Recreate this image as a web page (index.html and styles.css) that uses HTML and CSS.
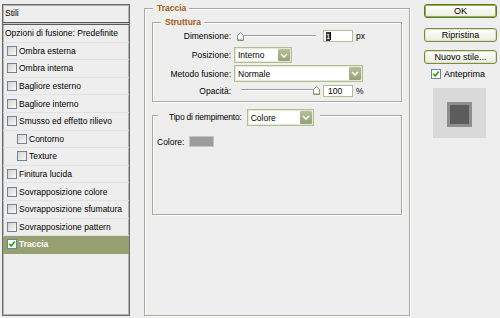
FILE: index.html
```html
<!DOCTYPE html>
<html lang="it">
<head>
    <meta charset="UTF-8">
    <meta name="viewport" content="width=device-width, initial-scale=1.0">
    <title>Stile livello</title>
    <link rel="stylesheet" href="styles.css">
</head>
<body>
    <div class="dialog">
        <div class="styles-list">
            <div class="list-head">Stili</div>
            <div class="list-split"></div>
            <div class="list-item plain">Opzioni di fusione: Predefinite</div>
            <div class="list-item"><span class="cb"></span>Ombra esterna</div>
            <div class="list-item"><span class="cb"></span>Ombra interna</div>
            <div class="list-item"><span class="cb"></span>Bagliore esterno</div>
            <div class="list-item"><span class="cb"></span>Bagliore interno</div>
            <div class="list-item"><span class="cb"></span>Smusso ed effetto rilievo</div>
            <div class="list-item sub"><span class="cb"></span>Contorno</div>
            <div class="list-item sub"><span class="cb"></span>Texture</div>
            <div class="list-item"><span class="cb"></span>Finitura lucida</div>
            <div class="list-item"><span class="cb"></span>Sovrapposizione colore</div>
            <div class="list-item"><span class="cb"></span>Sovrapposizione sfumatura</div>
            <div class="list-item"><span class="cb"></span>Sovrapposizione pattern</div>
            <div class="list-item active">
                <span class="cb checked"><svg width="8" height="8" viewBox="0 0 8 8"><polyline points="1.2,3.8 3.2,6 6.8,1.4" fill="none" stroke="#22a11f" stroke-width="1.7"/></svg></span>Traccia
            </div>
        </div>

        <fieldset class="group">
            <legend class="group-title">Traccia</legend>

            <fieldset class="sub-group">
                <legend class="group-title sub-title">Struttura</legend>

                <div class="field row-size">
                    <span class="field-label">Dimensione:</span>
                    <div class="slider">
                        <div class="track">
                            <span class="thumb" style="left: 0%"><svg width="7" height="9" viewBox="0 0 7 9"><polygon points="0.5,3.5 3.5,0.5 6.5,3.5 6.5,8.5 0.5,8.5" fill="#fff" stroke="#8c8c8c"/><line x1="1" y1="8" x2="6" y2="8" stroke="#5aa536"/></svg></span>
                        </div>
                    </div>
                    <span class="num"><span class="sel">1</span><i class="caret"></i></span>
                    <span class="unit">px</span>
                </div>

                <div class="field row-pos">
                    <span class="field-label">Posizione:</span>
                    <div class="select w-pos">
                        <span class="select-text">Interno</span>
                        <span class="arrow"><svg width="8" height="5" viewBox="0 0 8 5"><polyline points="1,1 4,4 7,1" fill="none" stroke="#fff" stroke-width="1.6"/></svg></span>
                    </div>
                </div>

                <div class="field row-blend">
                    <span class="field-label">Metodo fusione:</span>
                    <div class="select w-blend">
                        <span class="select-text">Normale</span>
                        <span class="arrow"><svg width="8" height="5" viewBox="0 0 8 5"><polyline points="1,1 4,4 7,1" fill="none" stroke="#fff" stroke-width="1.6"/></svg></span>
                    </div>
                </div>

                <div class="field row-opacity">
                    <span class="field-label">Opacità:</span>
                    <div class="slider">
                        <div class="track">
                            <span class="thumb" style="left: 100%"><svg width="7" height="9" viewBox="0 0 7 9"><polygon points="0.5,3.5 3.5,0.5 6.5,3.5 6.5,8.5 0.5,8.5" fill="#fff" stroke="#8c8c8c"/><line x1="1" y1="8" x2="6" y2="8" stroke="#5aa536"/></svg></span>
                        </div>
                    </div>
                    <span class="num num-pad">100</span>
                    <span class="unit">%</span>
                </div>
            </fieldset>

            <fieldset class="sub-group fill-group">
                <legend class="fill-legend">
                    <span class="fill-label">Tipo di riempimento:</span>
                    <span class="select w-fill">
                        <span class="select-text">Colore</span>
                        <span class="arrow"><svg width="8" height="5" viewBox="0 0 8 5"><polyline points="1,1 4,4 7,1" fill="none" stroke="#fff" stroke-width="1.6"/></svg></span>
                    </span>
                </legend>
                <div class="field row-color">
                    <span>Colore:</span>
                    <span class="swatch"></span>
                </div>
            </fieldset>
        </fieldset>

        <div class="actions">
            <button class="btn default">OK</button>
            <button class="btn btn-reset">Ripristina</button>
            <button class="btn btn-new">Nuovo stile...</button>
            <div class="preview-check">
                <span class="cb checked"><svg width="8" height="8" viewBox="0 0 8 8"><polyline points="1.2,3.8 3.2,6 6.8,1.4" fill="none" stroke="#22a11f" stroke-width="1.7"/></svg></span>Anteprima
            </div>
            <div class="preview"><div class="preview-shape"></div></div>
        </div>
    </div>
</body>
</html>
```

FILE: styles.css
```css
html, body {
    margin: 0;
    overflow: hidden;
}
body {
    background-color: #eeeeee;
    font-family: "Liberation Sans", Arial, sans-serif;
    font-size: 8.5px;
    color: #000;
}
.dialog {
    display: flex;
    width: 500px;
    height: 318px;
    box-sizing: border-box;
    padding: 3px 0 2px 2px;
}

/* left list */
.styles-list {
    width: 128px;
    box-sizing: border-box;
    margin-top: 1px;
    border: 1px solid #6b6b6b;
    box-shadow: inset 0 0 0 1px #b4b4b4;
}
.list-head {
    height: 17px;
    line-height: 17px;
    padding-left: 2px;
}
.list-split {
    height: 1px;
    border-top: 1px solid #5a5a5a;
    border-bottom: 1px solid #5a5a5a;
    background-color: #c8c8c8;
}
.list-item {
    height: 17.6px;
    box-sizing: border-box;
    display: flex;
    align-items: center;
    gap: 2px;
    padding-left: 4px;
    border-bottom: 1px solid #e2e2e2;
    white-space: nowrap;
}
.list-item.plain {
    padding-left: 2px;
}
.list-item.sub {
    padding-left: 14px;
}
.list-item.active {
    background-color: #96a071;
    color: #fff;
    font-weight: bold;
    border-bottom-color: #96a071;
}
.cb {
    width: 10px;
    height: 10px;
    box-sizing: border-box;
    flex: none;
    border: 1px solid #6f829e;
    background: linear-gradient(135deg, #d4d4ca, #fafaf6);
    display: flex;
    align-items: center;
    justify-content: center;
}
.cb.checked {
    background: #fff;
}

/* group boxes */
fieldset {
    margin: 0;
    min-width: 0;
    border: 1px solid #aaa9a0;
    box-shadow: inset 1px 1px 0 #fff, 1px 1px 0 #fff;
}
.group {
    width: 266px;
    box-sizing: border-box;
    margin-left: 14px;
    padding: 0 7px;
}
.group-title {
    margin-left: 1px;
    padding: 0 3px 0 4px;
    line-height: 10px;
    font-weight: bold;
    color: #a35b14;
    background-color: #eeeeee;
}
.sub-group {
    margin-top: 4px;
    padding: 0 0 3px 8px;
}
.sub-title {
    margin-left: 0;
}

.field {
    display: flex;
    align-items: center;
}
.field-label {
    width: 70px;
    flex: none;
    margin-right: 3px;
    text-align: right;
}
.row-size {
    height: 16px;
    margin-top: 1px;
}
.row-pos {
    height: 16px;
    margin-top: 3px;
}
.row-blend {
    height: 17px;
    margin-top: 2px;
}
.row-opacity {
    height: 15px;
    margin-top: 1px;
}

.slider {
    width: 82px;
    height: 11px;
    box-sizing: border-box;
    padding: 4px 3px 0 3.5px;
    margin: 0 4px 0 3px;
}
.track {
    position: relative;
    height: 1px;
    background-color: #9c9c9c;
    box-shadow: 0 1px 0 #fff;
}
.thumb {
    position: absolute;
    top: -3px;
    width: 7px;
    height: 9px;
    margin-left: -3.5px;
    display: flex;
}
.num {
    width: 30px;
    height: 12px;
    box-sizing: border-box;
    border: 1px solid #b3be95;
    background-color: #fff;
    display: flex;
    align-items: center;
    padding-left: 2px;
    line-height: 9px;
}
.num-pad {
    padding-left: 4px;
    line-height: 10px;
}
.sel {
    background-color: #3a3a3a;
    color: #fff;
    font-size: 8px;
}
.caret {
    width: 1px;
    height: 8px;
    background-color: #000;
}
.unit {
    margin-left: 3px;
}

.select {
    display: flex;
    box-sizing: border-box;
    height: 16px;
    border: 1px solid #b3be95;
    background-color: #fff;
    box-shadow: inset 0 0 0 1px #e4e9d6;
}
.w-pos {
    width: 58px;
}
.w-blend {
    width: 129px;
    height: 17px;
}
.w-fill {
    width: 67px;
    height: 17px;
}
.select-text {
    flex: 1;
    padding-left: 3px;
    display: flex;
    align-items: center;
}
.arrow {
    width: 12px;
    margin: 1px;
    border-radius: 1px;
    background: linear-gradient(#b6c09a, #95a177);
    display: flex;
    align-items: center;
    justify-content: center;
}

/* fill type box */
.fill-group {
    margin-top: 7px;
    padding: 0 0 67px 4px;
}
.fill-legend {
    height: 13px;
    margin-left: 1px;
    padding: 0 6px 0 11px;
    display: flex;
    align-items: flex-start;
    gap: 5px;
    background-color: #eeeeee;
}
.fill-label {
    line-height: 17px;
    letter-spacing: -0.2px;
}
.row-color {
    height: 11px;
    margin-top: 14px;
}
.swatch {
    width: 25px;
    height: 11px;
    box-sizing: border-box;
    margin-left: 5px;
    border: 1px solid #c4c4c4;
    background-color: #9c9c9c;
}

/* right column */
.actions {
    width: 73px;
    margin: 1px 0 0 14px;
    display: flex;
    flex-direction: column;
}
.btn {
    height: 14px;
    box-sizing: border-box;
    padding: 0;
    font-family: inherit;
    font-size: 9px;
    color: #000;
    border: 1px solid #7a8c4c;
    border-radius: 3px;
    background: linear-gradient(#ffffff, #ebecdc);
    box-shadow: inset 0 0 0 1px #dbe2c2;
}
.btn.default {
    border-color: #5c7a26;
    box-shadow: inset 0 0 0 1px #93ad5a;
}
.btn-reset {
    margin-top: 10px;
}
.btn-new {
    margin-top: 8px;
}
.preview-check {
    height: 11px;
    margin-top: 4px;
    padding-left: 7px;
    display: flex;
    align-items: center;
    gap: 3px;
    font-size: 9px;
}
.preview {
    width: 53px;
    height: 50px;
    margin: 9px 0 0 9px;
    background-color: #d9d9d9;
    display: flex;
    align-items: center;
    justify-content: center;
}
.preview-shape {
    width: 25px;
    height: 25px;
    box-sizing: border-box;
    margin-top: 3px;
    border: 3px solid #8e8e8e;
    background-color: #5c5c5c;
}
```
